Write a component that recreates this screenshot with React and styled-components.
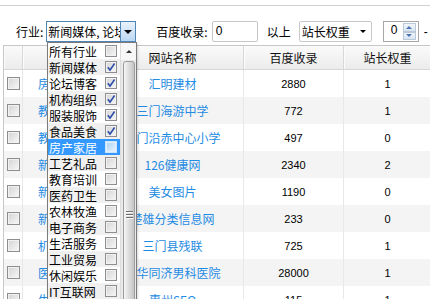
import React from 'react';
import styled, { createGlobalStyle } from 'styled-components';

const GlobalStyle = createGlobalStyle`
  html, body { margin: 0; padding: 0; background: #fff; }
  body {
    font-family: "Noto Sans CJK SC", "Liberation Sans", sans-serif;
    font-size: 12px;
    color: #000;
  }
  * { box-sizing: border-box; }
`;

const Page = styled.div`
  position: relative;
  width: 430px;
  height: 299px;
  overflow: hidden;
  background: #fff;
`;

const TopRule = styled.div`
  height: 6px;
  border-bottom: 1px solid #d0d0d0;
`;

const FilterBar = styled.div`
  display: flex;
  align-items: center;
  height: 39px;
  padding: 15px 0 3px 16px;
  white-space: nowrap;
`;

const Label = styled.span`
  font-size: 12px;
  line-height: 1;
  margin-left: ${p => p.$ml || 0}px;
  margin-right: ${p => p.$mr || 0}px;
`;

const Select = styled.div`
  display: flex;
  width: 90px;
  height: 21px;
  border: 1px solid #4f86b8;
  background: #fff;
`;

const SelectText = styled.div`
  flex: 1;
  overflow: hidden;
  white-space: nowrap;
  padding-left: 1px;
  line-height: 19px;
`;

const SelectButton = styled.div`
  width: 15px;
  border-left: 1px solid #4f86b8;
  background: linear-gradient(#e8f2fc, #bcd7f1);
  display: flex;
  align-items: center;
  justify-content: center;
`;

const Tri = styled.span`
  width: 0;
  height: 0;
  border-left: ${p => p.$s || 4}px solid transparent;
  border-right: ${p => p.$s || 4}px solid transparent;
  ${p => (p.$up ? 'border-bottom' : 'border-top')}: ${p => p.$s || 4}px solid ${p => p.$c || '#000'};
`;

const TextInput = styled.div`
  width: 46px;
  height: 21px;
  border: 1px solid #c6c6c6;
  border-radius: 2px;
  padding-left: 3px;
  line-height: 19px;
  font-family: "Liberation Sans", sans-serif;
  font-size: 12px;
`;

const PlainSelect = styled.div`
  display: flex;
  align-items: center;
  justify-content: space-between;
  width: 73px;
  height: 21px;
  margin-left: 8px;
  border: 1px solid #c8c8c8;
  border-radius: 2px;
  padding: 0 5px 0 2px;
`;

const Spinner = styled.div`
  display: flex;
  align-items: center;
  width: 36px;
  height: 21px;
  margin-left: 11px;
  border: 1px solid #a6a6a6;
  padding: 1px 2px 1px 0;
`;

const SpinValue = styled.div`
  flex: 1;
  padding-left: 7px;
  font-family: "Liberation Sans", sans-serif;
  font-size: 12px;
  line-height: 1;
  margin-top: -3px;
`;

const SpinButtons = styled.div`
  display: flex;
  flex-direction: column;
  width: 13px;
  height: 17px;
`;

const SpinBtn = styled.div`
  flex: 1;
  display: flex;
  align-items: center;
  justify-content: center;
  border: 1px solid #b9c9da;
  background: linear-gradient(#f2f6fb, #d9e5f2);
`;

const Table = styled.div`
  width: max-content;
  margin-left: 3px;
  border-left: 1px solid #c8c8c8;
  border-top: 1px solid #c8c8c8;
`;

const cols = '19px 79px 142px 100px 88px 100px';

const HeadRow = styled.div`
  display: grid;
  grid-template-columns: ${cols};
  height: 24px;
  border-bottom: 1px solid #d6d6d6;
  background: linear-gradient(#fafafa, #ececec);
`;

const HeadCell = styled.div`
  display: flex;
  align-items: center;
  justify-content: center;
  border-right: 1px solid #d8d8d8;
  box-shadow: inset 1px 0 #fbfbfb;
  font-size: 12px;
  color: #111;
`;

const Row = styled.div`
  display: grid;
  grid-template-columns: ${cols};
  height: 27px;
  background: ${p => (p.$alt ? '#f4f4f4' : '#fff')};
`;

const Cell = styled.div`
  display: flex;
  align-items: center;
  justify-content: center;
  white-space: nowrap;
  overflow: hidden;
  border-right: 1px solid #e8e8e8;
  color: ${p => (p.$link ? '#1f8be3' : '#000')};
  font-family: ${p => (p.$num ? '"Liberation Sans", sans-serif' : 'inherit')};
  font-size: ${p => (p.$num ? '11px' : '12px')};
`;

const Box = styled.span`
  display: inline-flex;
  align-items: center;
  justify-content: center;
  flex: none;
  width: ${p => p.$size || 12}px;
  height: ${p => p.$size || 12}px;
  border: 1px solid ${p => (p.$active ? '#cfe4fb' : '#8e8e8e')};
  background: ${p =>
    p.$active
      ? 'linear-gradient(135deg, #a9cff4, #eef6ff)'
      : 'linear-gradient(135deg, #d3d3d3, #f8f8f8)'};
  box-shadow: inset 0 0 0 1px ${p => (p.$active ? '#e2efff' : '#f2f2f2')};
`;

const Dropdown = styled.div`
  position: absolute;
  left: 47px;
  top: 42px;
  width: 90px;
  height: 270px;
  display: flex;
  border: 1px solid #7b7b7b;
  background: #fff;
  box-shadow: 1px 1px 2px rgba(0, 0, 0, 0.15);
`;

const ItemList = styled.div`
  width: 72px;
`;

const Item = styled.div`
  display: flex;
  align-items: center;
  justify-content: space-between;
  height: 16px;
  padding: 0 3px 0 1px;
  white-space: nowrap;
  font-size: 12px;
  background: ${p => (p.$sel ? '#3399ff' : p.$alt ? '#f0f0f0' : '#fff')};
  color: ${p => (p.$sel ? '#fff' : '#000')};
`;

const ScrollBar = styled.div`
  position: relative;
  width: 16px;
  background: #eaeaea;
  border-left: 1px solid #dcdcdc;
`;

const ScrollUp = styled.div`
  height: 17px;
  display: flex;
  align-items: center;
  justify-content: center;
  background: #f7f7f7;
`;

const Thumb = styled.div`
  margin: 1px 1px 0 2px;
  height: 260px;
  border: 1px solid #9c9c9c;
  border-radius: 3px 3px 0 0;
  background: linear-gradient(90deg, #f6f6f6, #dedede 45%, #c6c6c6);
  display: flex;
  flex-direction: column;
  align-items: center;
  padding-top: 149px;
  gap: 2px;
`;

const Grip = styled.span`
  width: 7px;
  height: 1px;
  background: #6e6e6e;
  box-shadow: 0 1px #fafafa;
`;

const Dash = styled.span`
  margin-left: 5px;
  font-family: "Liberation Sans", sans-serif;
`;

const Check = () => (
  <svg width="10" height="10" viewBox="0 0 10 10">
    <path d="M1.8 5.2 L4 8 L8.6 1.6" fill="none" stroke="#3553ad" strokeWidth="1.7" />
  </svg>
);

const industries = [
  '所有行业', '新闻媒体', '论坛博客', '机构组织', '服装服饰', '食品美食', '房产家居',
  '工艺礼品', '教育培训', '医药卫生', '农林牧渔', '电子商务', '生活服务', '工业贸易',
  '休闲娱乐', 'IT互联网', '其他',
];
const checked = new Set([1, 2, 3, 4, 5]);

const rows = [
  ['房产家居', '汇明建材', '2880', '1'],
  ['教育培训', '三门海游中学', '772', '1'],
  ['教育培训', '三门沿赤中心小学', '497', '0'],
  ['新闻媒体', '126健康网', '2340', '2'],
  ['新闻媒体', '美女图片', '1190', '0'],
  ['新闻媒体', '楚雄分类信息网', '233', '0'],
  ['机构组织', '三门县残联', '725', '1'],
  ['医药卫生', '中华同济男科医院', '28000', '1'],
  ['生活服务', '惠州SEO', '115', '1'],
];

export default function App() {
  return (
    <Page>
      <GlobalStyle />
      <TopRule />
      <FilterBar>
        <Label $mr={3}>行业:</Label>
        <Select>
          <SelectText>新闻媒体, 论坛博客, 机构组织</SelectText>
          <SelectButton><Tri /></SelectButton>
        </Select>
        <Label $ml={20} $mr={4}>百度收录:</Label>
        <TextInput>0</TextInput>
        <Label $ml={9}>以上</Label>
        <PlainSelect>
          <span>站长权重</span>
          <Tri $s={3.5} />
        </PlainSelect>
        <Spinner>
          <SpinValue>0</SpinValue>
          <SpinButtons>
            <SpinBtn><Tri $up $s={3} $c="#4a74b4" /></SpinBtn>
            <SpinBtn><Tri $s={3} $c="#4a74b4" /></SpinBtn>
          </SpinButtons>
        </Spinner>
        <Dash>-</Dash>
      </FilterBar>
      <Table>
        <HeadRow>
          <HeadCell />
          <HeadCell />
          <HeadCell>网站名称</HeadCell>
          <HeadCell>百度收录</HeadCell>
          <HeadCell>站长权重</HeadCell>
          <HeadCell>操作</HeadCell>
        </HeadRow>
        {rows.map((r, i) => (
          <Row key={i} $alt={i % 2 === 1}>
            <Cell><Box $size={13} /></Cell>
            <Cell $link>{r[0]}</Cell>
            <Cell $link>{r[1]}</Cell>
            <Cell $num>{r[2]}</Cell>
            <Cell $num>{r[3]}</Cell>
            <Cell />
          </Row>
        ))}
      </Table>
      <Dropdown>
        <ItemList>
          {industries.map((name, i) => (
            <Item key={name} $alt={i % 2 === 1} $sel={i === 6}>
              <span>{name}</span>
              <Box $active={i === 6}>{checked.has(i) && <Check />}</Box>
            </Item>
          ))}
        </ItemList>
        <ScrollBar>
          <ScrollUp><Tri $up $s={3} $c="#333" /></ScrollUp>
          <Thumb>
            <Grip />
            <Grip />
            <Grip />
          </Thumb>
        </ScrollBar>
      </Dropdown>
    </Page>
  );
}
